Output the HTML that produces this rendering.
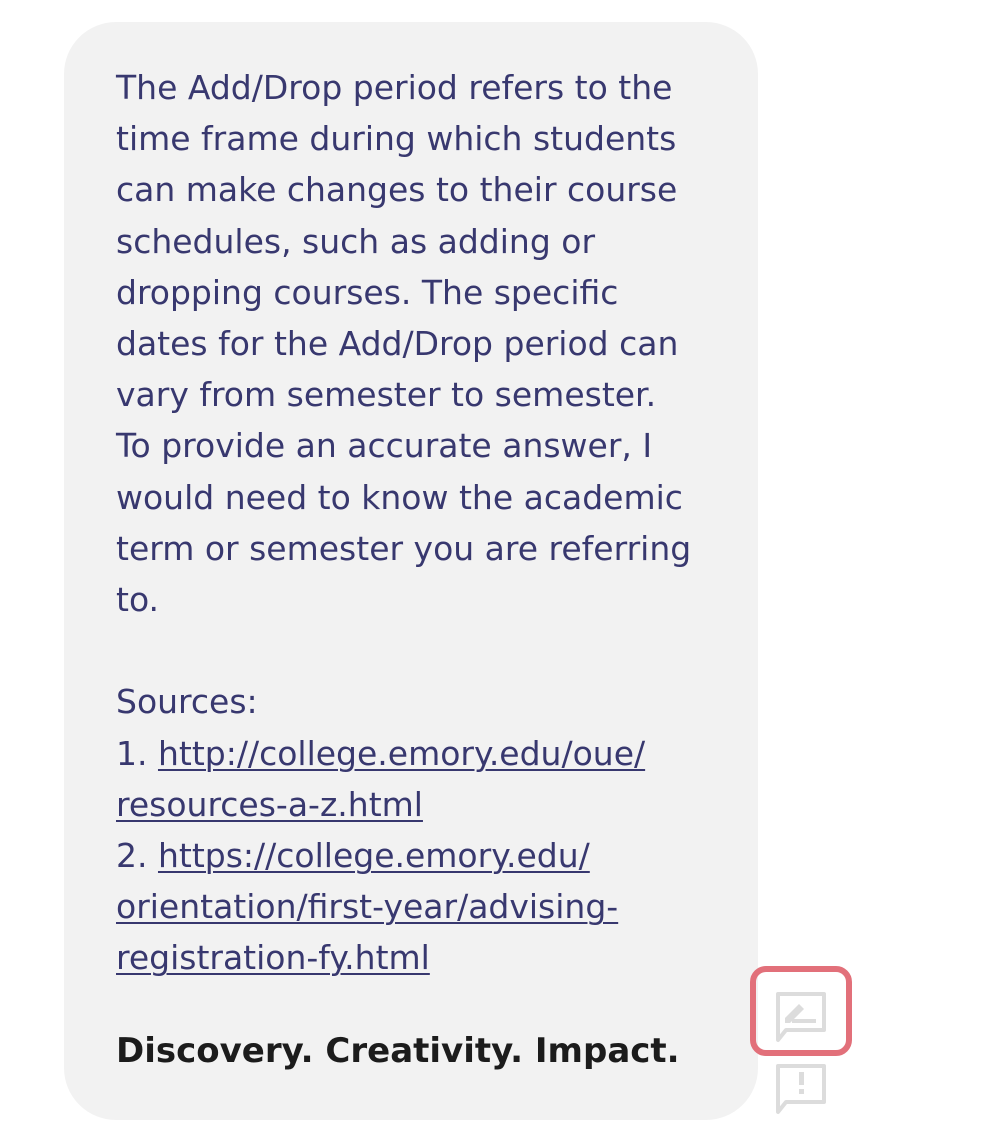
<!DOCTYPE html>
<html><head><style>
html,body{margin:0;padding:0;background:#fff;width:1000px;height:1142px;overflow:hidden}
.b{position:absolute;left:64px;top:22px;width:694px;height:1098px;background:#f2f2f2;border-radius:52px}
.t{position:absolute;left:116px;top:62px;font-family:"DejaVu Sans","Liberation Sans",sans-serif;font-size:33px;color:#38386f;line-height:51.2px;white-space:nowrap}
.t a{color:#38386f;text-decoration:underline;text-underline-offset:4px;text-decoration-thickness:1.5px}
.d{position:absolute;left:116px;top:1031px;font-family:"DejaVu Sans","Liberation Sans",sans-serif;font-weight:bold;font-size:34px;color:#1c1c1c;white-space:nowrap}
.r{position:absolute;left:750px;top:966px;width:90px;height:78px;border:6px solid #e2707a;border-radius:16px}
</style></head><body>
<div class="b"></div>
<div class="t">The Add/Drop period refers to the<br>time frame during which students<br>can make changes to their course<br>schedules, such as adding or<br>dropping courses. The specific<br>dates for the Add/Drop period can<br>vary from semester to semester.<br>To provide an accurate answer, I<br>would need to know the academic<br>term or semester you are referring<br>to.<br><br>Sources:<br>1. <a>http://college.emory.edu/oue/</a><br><a>resources-a-z.html</a><br>2. <a>https://college.emory.edu/</a><br><a>orientation/first-year/advising-</a><br><a>registration-fy.html</a></div>
<div class="d">Discovery. Creativity. Impact.</div>
<div class="r"></div>
<svg style="position:absolute;left:772px;top:990px" width="58" height="128" viewBox="0 0 58 128">
<g fill="none" stroke="#dcdcdc" stroke-width="4">
<path d="M6 4 H52 V40 H14 L6 50 Z" stroke-linejoin="round"/>
<path d="M6 76 H52 V112 H14 L6 122 Z" stroke-linejoin="round"/>
</g>
<path d="M13 33 L13 28 L27 14 L32 19 L18 33 Z" fill="#dcdcdc"/>
<rect x="20" y="29" width="24" height="4" fill="#dcdcdc"/>
<rect x="27" y="82" width="5" height="13" fill="#dcdcdc"/>
<rect x="27" y="99" width="5" height="5" fill="#dcdcdc"/>
</svg>
</body></html>
